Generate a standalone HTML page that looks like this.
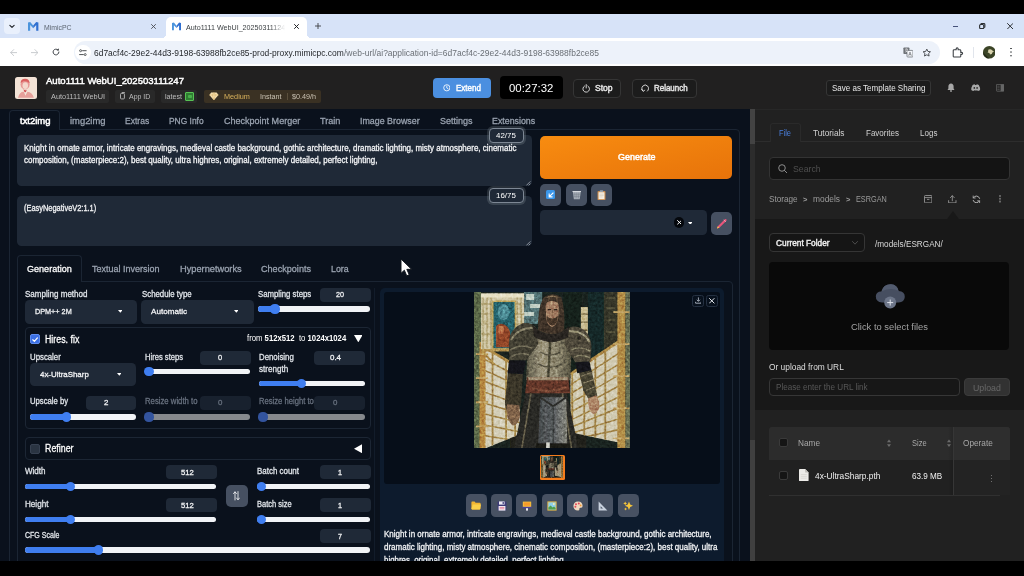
<!DOCTYPE html>
<html lang="en"><head><meta charset="utf-8"><title>Auto1111 WebUI</title>
<style>
*{box-sizing:border-box;margin:0;padding:0}
html,body{width:1024px;height:576px;overflow:hidden;background:#000;font-family:"Liberation Sans",sans-serif}
.a{position:absolute}
.t{position:absolute;white-space:nowrap;transform-origin:0 50%;display:block}
#stage{position:absolute;left:0;top:0;width:1024px;height:576px;overflow:hidden;background:#000}
/* chrome */
#tabstrip{left:0;top:14px;width:1024px;height:24px;background:#d7e3f8}
#toolbar{left:0;top:38px;width:1024px;height:28px;background:#fff}
#acttab{left:166px;top:17px;width:141px;height:21px;background:#fff;border-radius:5px 5px 0 0}
#urlpill{left:74px;top:41px;width:866px;height:23px;background:#edf2fa;border-radius:12px}
/* app header */
#hdr{left:0;top:66px;width:1024px;height:43px;background:#212020}
.tag{background:#292929;border-radius:2px;height:12.5px;top:90px}
.hbtn{border:1px solid #353535;border-radius:4px;background:#1c1c1c}
/* main */
#main{left:0;top:109px;width:750px;height:453px;background:#0a111c}
#strip{left:749.5px;top:108.5px;width:5.5px;height:453px;background:#2c2c2c}
#right{left:755px;top:108.5px;width:269px;height:453px;background:#212121}
.inp{background:#1f2937;border-radius:4.5px}
.num{background:#1f2937;border-radius:4px;height:14px}
.num.dim{background:#18212e}
.trk{height:5.2px;border-radius:3px;background:#f1f3f6}
.trk.dim{background:#86898d}
.fill{height:5.2px;border-radius:3px;background:#3f7ef0}
.th{width:9.2px;height:9.2px;border-radius:50%;background:#3f7ef0}
.th.dim{background:#33549e}
.gbtn{background:#465061;border-radius:5px}
.box{border:1px solid #1c2634;border-radius:4px}
#stage,#texts{filter:blur(.4px)}

</style></head><body>
<div id="stage">
<!-- ===== browser chrome ===== -->
<div class="a" id="tabstrip"></div>
<div class="a" style="left:3.9px;top:18.3px;width:16.1px;height:15.8px;border-radius:4px;background:#e9f0fc"></div>
<svg class="a" style="left:9px;top:23.8px" width="6" height="5.2" viewBox="0 0 7 6"><path d="M1 1.5 L3.5 4 L6 1.5" fill="none" stroke="#1f2328" stroke-width="1.3" stroke-linecap="round" stroke-linejoin="round"/></svg>
<svg class="a" style="left:28.3px;top:22.3px" width="10.4" height="8.8" viewBox="0 0 104 88"><path d="M0 6 L22 0 L52 36 L52 62 L22 30 L22 88 L0 88Z" fill="#4b94dc"/><path d="M104 6 L82 0 L52 36 L52 62 L82 30 L82 88 L104 88Z" fill="#2f6fd0"/></svg>
<svg class="a" style="left:150.8px;top:23.8px" width="5" height="5" viewBox="0 0 5 5"><path d="M.5 .5L4.5 4.5M4.5 .5L.5 4.5" stroke="#474b50" stroke-width=".9" stroke-linecap="round"/></svg>
<div class="a" id="acttab"></div>
<div class="a" style="left:162px;top:34px;width:4.4px;height:4px;background:radial-gradient(circle at 0 0,#d7e3f8 4px,#fff 4.3px)"></div>
<div class="a" style="left:307px;top:34px;width:4.4px;height:4px;background:radial-gradient(circle at 100% 0,#d7e3f8 4px,#fff 4.3px)"></div>
<svg class="a" style="left:172.2px;top:22.3px" width="9" height="8.8" viewBox="0 0 104 88"><path d="M0 6 L22 0 L52 36 L52 62 L22 30 L22 88 L0 88Z" fill="#4b94dc"/><path d="M104 6 L82 0 L52 36 L52 62 L82 30 L82 88 L104 88Z" fill="#2f6fd0"/></svg>
<svg class="a" style="left:293.8px;top:23.8px" width="5" height="5" viewBox="0 0 5 5"><path d="M.5 .5L4.5 4.5M4.5 .5L.5 4.5" stroke="#202124" stroke-width="1" stroke-linecap="round"/></svg>
<svg class="a" style="left:314.7px;top:23.3px" width="6" height="6" viewBox="0 0 6 6"><path d="M3 .3V5.7M.3 3H5.7" stroke="#3c4043" stroke-width=".9" stroke-linecap="round"/></svg>
<!-- window controls -->
<div class="a" style="left:953px;top:25.6px;width:5.4px;height:1.1px;background:#46527a"></div>
<svg class="a" style="left:979.4px;top:22.8px" width="6.4" height="6.4" viewBox="0 0 7 7"><rect x=".7" y="1.700000" width="4.500000" height="4.500000" rx="1.100000" fill="none" stroke="#2b2f33" stroke-width="1.250000"/><path d="M2.100000 1.300000Q2.200000 .6 3 .6H5.400000Q6.400000 .6 6.400000 1.600000V4Q6.400000 4.800000 5.700000 4.900000" fill="none" stroke="#2b2f33" stroke-width="1.250000"/></svg>
<svg class="a" style="left:1007px;top:23px" width="6.4" height="6.4" viewBox="0 0 6.4 6.4"><path d="M.5 .5L5.9 5.9M5.9 .5L.5 5.9" stroke="#2b2f33" stroke-width="1" stroke-linecap="round"/></svg>
<!-- toolbar -->
<div class="a" id="toolbar"></div>
<svg class="a" style="left:9.6px;top:48.6px" width="7.6" height="7.2" viewBox="0 0 7.6 7.2"><path d="M7.3 3.6H.8M3.7 .6L.7 3.6L3.7 6.6" fill="none" stroke="#c3c6ca" stroke-width=".9" stroke-linecap="round" stroke-linejoin="round"/></svg>
<svg class="a" style="left:30.6px;top:48.6px" width="7.6" height="7.2" viewBox="0 0 7.6 7.2"><path d="M.3 3.6H6.8M3.9 .6L6.9 3.6L3.9 6.6" fill="none" stroke="#c3c6ca" stroke-width=".9" stroke-linecap="round" stroke-linejoin="round"/></svg>
<svg class="a" style="left:52.4px;top:48.2px" width="8" height="8" viewBox="0 0 8 8"><path d="M6.9 4A2.9 2.9 0 1 1 5.9 1.8" fill="none" stroke="#41454a" stroke-width="1" stroke-linecap="round"/><path d="M4.6 2.4H6.9V.2Z" fill="#41454a"/></svg>
<div class="a" id="urlpill"></div>
<div class="a" style="left:75px;top:44.6px;width:15.6px;height:15.6px;border-radius:50%;background:#fff"></div>
<svg class="a" style="left:78.6px;top:48.6px" width="8" height="7.4" viewBox="0 0 8 7.4"><circle cx="1.6" cy="1.7" r="1" fill="none" stroke="#3c4043" stroke-width=".8"/><path d="M3.6 1.7H7.2" stroke="#3c4043" stroke-width=".9" stroke-linecap="round"/><circle cx="6.2" cy="5.6" r="1" fill="none" stroke="#3c4043" stroke-width=".8"/><path d="M.6 5.6H4.3" stroke="#3c4043" stroke-width=".9" stroke-linecap="round"/></svg>
<!-- translate / star / ext / avatar / menu -->
<svg class="a" style="left:902.6px;top:47px" width="10.6" height="10.6" viewBox="0 0 10.6 10.6"><rect x=".4" y=".4" width="6" height="6.6" rx=".8" fill="#6f7378"/><rect x="4" y="3.4" width="6" height="6.6" rx=".8" fill="#f4f6fa" stroke="#6f7378" stroke-width=".8"/><path d="M2 2.2H4.8M3.4 1.4V2.2M2.2 5.2Q4.2 4.4 4.6 2.4M2.4 3.4Q3.2 4.6 4.6 5.2" stroke="#fff" stroke-width=".55" fill="none"/><path d="M5.6 8.8L7 5L8.4 8.8M6.1 7.6H7.9" stroke="#5f6368" stroke-width=".6" fill="none"/></svg>
<svg class="a" style="left:922.4px;top:47.6px" width="9.6" height="9.4" viewBox="0 0 24 24"><path d="M12 2.8l2.9 6 6.5.8-4.8 4.5 1.3 6.5L12 17.4l-5.9 3.2 1.3-6.5L2.6 9.600000000000001l6.5-.8z" fill="none" stroke="#3f4347" stroke-width="2.3" stroke-linejoin="round"/></svg>
<svg class="a" style="left:951px;top:45.4px" width="13.4" height="13.4" viewBox="0 0 24 24"><path d="M5.500000 8.500000H9.200000V7a1.800000 1.800000 0 0 1 3.600000 0V8.500000H16Q17.500000 8.500000 17.500000 10V13.200000H19a1.800000 1.800000 0 0 1 0 3.600000H17.500000V20Q17.500000 21.500000 16 21.500000H5.500000Q4 21.500000 4 20V10Q4 8.500000 5.500000 8.500000Z" fill="none" stroke="#3a3e42" stroke-width="1.900000" stroke-linejoin="miter"/></svg>
<div class="a" style="left:973px;top:46.5px;width:1px;height:11.5px;background:#e1e5ec"></div>
<svg class="a" style="left:982.6px;top:46.2px" width="12.6" height="12.6" viewBox="0 0 12.6 12.6"><circle cx="6.300000" cy="6.300000" r="6.300000" fill="#3b4427"/><path d="M0 6.300000A6.300000 6.300000 0 0 0 6.300000 12.600000Q3 9 0 6.300000Z" fill="#262c1a"/><path d="M5.200000 3.800000Q7.600000 2.600000 9.400000 4.600000L11 5.400000L9.600000 6.200000Q9.200000 8.400000 7 8.600000L6.400000 7L4.600000 6.600000Q5.600000 5.600000 5.200000 3.800000Z" fill="#d9d3ae"/></svg>
<div class="a" style="left:1010.2px;top:47.6px;width:1.7px;height:1.7px;border-radius:50%;background:#3c4043;box-shadow:0 3.6px 0 #3c4043,0 7.2px 0 #3c4043"></div>
<!-- ===== app header ===== -->
<div class="a" id="hdr"></div>
<div class="a" style="left:14.8px;top:77px;width:21.8px;height:21.8px;border-radius:2.5px;background:#f3e3d6;overflow:hidden">
<svg width="21.8" height="21.8" viewBox="0 0 22 22"><defs><filter id="bl1"><feGaussianBlur stdDeviation=".55"/></filter></defs><g filter="url(#bl1)"><ellipse cx="10.2" cy="7.6" rx="4.6" ry="5" fill="#e79a96"/><ellipse cx="10.4" cy="8.6" rx="2.8" ry="3.4" fill="#f4d9cd"/><path d="M5.6 6Q6 1.600000 10.4 1.800000Q14.600000 2 14.800000 6.400000Q12 3.600000 8.400000 4.400000Z" fill="#d9605f"/><path d="M8.400000 12.400000Q10.400000 18.500000 12 12.600000Q10.400000 14.400000 8.400000 12.400000Z" fill="#cf4f52"/><path d="M3 21Q5 14.500000 9 15L10.500000 19L12.500000 15Q17.500000 15.500000 19 21Z" fill="#e6a09a"/></g></svg></div>
<div class="a tag" style="left:46px;width:63.4px"></div>
<div class="a tag" style="left:114.6px;width:40.6px"></div>
<svg class="a" style="left:119.6px;top:92.4px" width="5.8" height="7.4" viewBox="0 0 5.8 7.4"><rect x=".5" y="1.5" width="3.9" height="5.4" rx=".8" fill="none" stroke="#b5b5b5" stroke-width=".9"/><path d="M1.7 .5H4.300000Q5.300000 .5 5.300000 1.500000V5.600000" fill="none" stroke="#b5b5b5" stroke-width=".9"/></svg>
<div class="a tag" style="left:161px;width:36px"></div>
<div class="a" style="left:185.4px;top:92.4px;width:8.6px;height:8.4px;background:#2f7d32;border:1px solid #57c254;border-radius:1px"></div>
<div class="a" style="left:188px;top:94.6px;width:3.6px;height:3.8px;background:#49b04a;border-radius:1px"></div>
<div class="a" style="left:203.8px;top:90px;width:117.4px;height:12.8px;border-radius:2px;background:#3a3123"></div>
<svg class="a" style="left:209px;top:91.8px" width="9.8" height="8.6" viewBox="0 0 9.8 8.6"><path d="M2.2 .4H7.600000L9.500000 3L4.900000 8.300000L.3 3Z" fill="#f6dfae"/><path d="M.3 3H9.500000M3.400000 3L4.900000 8.300000L6.400000 3L4.900000 .4Z" fill="none" stroke="#d7ae62" stroke-width=".5"/></svg>
<div class="a" style="left:286.8px;top:92.6px;width:1px;height:7.6px;background:#5a4f3c"></div>
<!-- Extend -->
<div class="a" style="left:433px;top:78px;width:57.6px;height:19.6px;border-radius:4px;background:#4b8fe0"></div>
<svg class="a" style="left:442.6px;top:84.2px" width="7.6" height="7.6" viewBox="0 0 7.6 7.6"><circle cx="3.8" cy="3.8" r="3.1" fill="none" stroke="#fff" stroke-width=".85"/><path d="M3.800000 2V4L5 4.700000" fill="none" stroke="#fff" stroke-width=".8" stroke-linecap="round"/></svg>
<!-- timer -->
<div class="a" style="left:500px;top:76px;width:63.4px;height:23.2px;border-radius:4px;background:#000"></div>
<!-- stop / relaunch -->
<div class="a hbtn" style="left:573px;top:78.6px;width:48.4px;height:19px"></div>
<svg class="a" style="left:582px;top:84px" width="8.4" height="8.6" viewBox="0 0 8.4 8.6"><path d="M2.500000 2A3.300000 3.300000 0 1 0 5.900000 2" fill="none" stroke="#e6e6e6" stroke-width=".9" stroke-linecap="round"/><path d="M4.200000 .6V4" stroke="#e6e6e6" stroke-width=".9" stroke-linecap="round"/></svg>
<div class="a hbtn" style="left:631.6px;top:78.6px;width:65px;height:19px"></div>
<svg class="a" style="left:641px;top:84px" width="8.4" height="8.4" viewBox="0 0 8.4 8.400000"><path d="M2 7.100000A3.400000 3.400000 0 1 1 6.400000 7.100000" fill="none" stroke="#e6e6e6" stroke-width=".9" stroke-linecap="round"/><path d="M.6 5.300000L2 7.300000L3.800000 6.200000" fill="none" stroke="#e6e6e6" stroke-width=".8" stroke-linecap="round"/></svg>
<!-- save as template -->
<div class="a hbtn" style="left:826px;top:80.4px;width:104.6px;height:16px;border-radius:3px"></div>
<svg class="a" style="left:947px;top:83.400000px" width="8" height="9.2" viewBox="0 0 8 9.200000"><path d="M4 .5Q1.400000 .8 1.400000 3.600000V5.600000L.5 7H7.500000L6.600000 5.600000V3.600000Q6.600000 .8 4 .5Z" fill="#a8a8a8"/><circle cx="4" cy="8" r=".9" fill="#a8a8a8"/></svg>
<svg class="a" style="left:971.4px;top:84.4px" width="9.4" height="7.2" viewBox="0 0 9.400000 7.200000"><path d="M1.600000 .9Q3 .2 3.700000 .3L4 .9H5.400000L5.700000 .3Q6.400000 .2 7.800000 .9Q9.300000 3.400000 9.100000 6Q8 6.900000 6.800000 7L6.300000 6.200000Q4.700000 6.600000 3.100000 6.200000L2.600000 7Q1.400000 6.900000 .3 6Q.1 3.400000 1.600000 .9Z" fill="#a8a8a8"/><ellipse cx="3.300000" cy="3.900000" rx=".8" ry=".9" fill="#212020"/><ellipse cx="6.100000" cy="3.900000" rx=".8" ry=".9" fill="#212020"/></svg>
<svg class="a" style="left:996px;top:84.2px" width="8.4" height="7.6" viewBox="0 0 8.400000 7.600000"><rect x=".4" y=".4" width="7.600000" height="6.800000" rx=".6" fill="none" stroke="#666" stroke-width=".8"/><rect x="4.600000" y=".4" width="3.400000" height="6.800000" fill="#666"/><path d="M1.400000 2.200000H3.600000M1.400000 3.800000H3.600000M1.400000 5.400000H3.600000" stroke="#666" stroke-width=".6"/></svg>
<!-- ===== main left (gradio) ===== -->
<div class="a" id="main"></div>
<div class="a" style="left:9.4px;top:129px;width:730.4px;height:440px;border:1px solid #1b2533;border-radius:0 4px 0 0"></div>
<div class="a" style="left:9.4px;top:110px;width:50.8px;height:20px;border:1px solid #1b2533;border-bottom:none;border-radius:4px 4px 0 0;background:#0a111c"></div>
<div class="a inp" style="left:17px;top:135px;width:515px;height:50.6px"></div>
<div class="a inp" style="left:17px;top:196px;width:515px;height:50px"></div>
<svg class="a" style="left:526.4px;top:181px" width="4.6" height="4.6" viewBox="0 0 4.6 4.6"><path d="M.4 4.400000L4.400000 .4M2.600000 4.400000L4.400000 2.600000" stroke="#b9c0ca" stroke-width=".7"/></svg>
<svg class="a" style="left:526.4px;top:241.4px" width="4.6" height="4.6" viewBox="0 0 4.6 4.6"><path d="M.4 4.400000L4.400000 .4M2.600000 4.400000L4.400000 2.600000" stroke="#b9c0ca" stroke-width=".7"/></svg>
<div class="a" style="left:489.4px;top:128px;width:34.6px;height:14.8px;border-radius:4px;background:#1f2937;border:1px solid #7d8794;box-shadow:0 0 0 2px rgba(192,200,210,.17)"></div>
<div class="a" style="left:489.4px;top:188px;width:34.6px;height:14.8px;border-radius:4px;background:#1f2937;border:1px solid #7d8794;box-shadow:0 0 0 2px rgba(192,200,210,.17)"></div>
<div class="a" style="left:540px;top:135.5px;width:192px;height:43px;border-radius:5px;background:linear-gradient(to bottom right,#f88c10,#e7730a)"></div>
<div class="a gbtn" style="left:540px;top:183.6px;width:21.4px;height:22.4px"></div>
<div class="a gbtn" style="left:566px;top:183.6px;width:21.4px;height:22.4px"></div>
<div class="a gbtn" style="left:591px;top:183.6px;width:21.4px;height:22.4px"></div>
<div class="a" style="left:546.3px;top:190.4px;width:9px;height:9px;border-radius:1.5px;background:#3b97ea"></div>
<svg class="a" style="left:547.8px;top:191.9px" width="6" height="6" viewBox="0 0 7.2 7.2"><path d="M6 1.200000L1.600000 5.600000M1.400000 2.400000V5.800000H4.800000" fill="none" stroke="#fff" stroke-width="1.3" stroke-linecap="square"/></svg>
<svg class="a" style="left:571.9px;top:190px" width="9.6" height="9.8" viewBox="0 0 11.4 11.6"><path d="M1 1.800000H10.400000L9.200000 11H2.200000Z" fill="#aab1bb"/><path d="M.6 1.800000H10.800000" stroke="#d5d9df" stroke-width="1.2"/><path d="M3.200000 3L3.800000 10M5.700000 3V10M8.200000 3L7.600000 10M1.800000 5H9.600000M2 7.500000H9.400000" stroke="#6c7581" stroke-width=".55"/></svg>
<svg class="a" style="left:597.3px;top:189.6px" width="9" height="10.4" viewBox="0 0 10.4 12"><rect x=".6" y="1.2" width="9.200000" height="10.400000" rx="1" fill="#c98a4b"/><rect x="1.800000" y="2.600000" width="6.800000" height="8" fill="#f7efe2"/><rect x="3.200000" y=".2" width="4" height="2.200000" rx=".6" fill="#9aa3ad"/><path d="M2.800000 4.800000H7.600000M2.800000 6.400000H7.600000M2.800000 8H6.400000" stroke="#c9c2b5" stroke-width=".6"/></svg>
<div class="a inp" style="left:540px;top:210px;width:167px;height:25px"></div>
<div class="a" style="left:673.8px;top:217.4px;width:10.6px;height:10.6px;border-radius:50%;background:#05080d"></div>
<svg class="a" style="left:676.7px;top:220.3px" width="4.8" height="4.8" viewBox="0 0 4.8 4.8"><path d="M.5 .5L4.300000 4.300000M4.300000 .5L.5 4.300000" stroke="#fff" stroke-width=".95" stroke-linecap="round"/></svg>
<svg class="a" style="left:687.6px;top:221.6px" width="4.6" height="2.8" viewBox="0 0 4.6 2.8"><path d="M0 0H4.600000L2.300000 2.800000Z" fill="#fff"/></svg>
<div class="a gbtn" style="left:711px;top:212px;width:21.4px;height:23px"></div>
<svg class="a" style="left:716px;top:217.6px" width="11.6" height="11.6" viewBox="0 0 11.6 11.6"><path d="M1 10.600000L1.800000 8.200000L8.800000 1.200000Q9.600000 .6 10.300000 1.300000Q11 2 10.400000 2.800000L3.400000 9.800000Z" fill="#e8557a"/><path d="M1 10.600000L1.800000 8.200000L3.400000 9.800000Z" fill="#f6c34a"/><path d="M7.800000 1.800000L9.800000 3.800000" stroke="#f4a8b8" stroke-width=".9"/></svg>
<svg class="a" style="left:400.2px;top:258.2px" width="12.8" height="19" viewBox="0 0 11.6 17.6"><path d="M.8 .9V14.200000L3.900000 11.300000L6.100000 16.500000L8.400000 15.500000L6.200000 10.500000H10.600000Z" fill="#fff" stroke="#10151c" stroke-width=".9" stroke-linejoin="round"/></svg>
<div class="a" style="left:17.4px;top:281px;width:715.8px;height:290px;border:1px solid #1b2533;border-radius:0 4px 0 0"></div>
<div class="a" style="left:17.4px;top:255px;width:64.6px;height:27px;border:1px solid #1b2533;border-bottom:none;border-radius:4px 4px 0 0;background:#0a111c"></div>
<div class="a" style="left:373.6px;top:288px;width:1px;height:274px;background:#121c2a"></div>
<div class="a inp" style="left:25px;top:299.5px;width:112px;height:24.30000000000001px"></div>
<svg class="a" style="left:117.7px;top:310.45px" width="4.6" height="2.8" viewBox="0 0 4.6 2.8"><path d="M0 0H4.600000L2.300000 2.800000Z" fill="#fff"/></svg>
<div class="a inp" style="left:141px;top:299.5px;width:112.80000000000001px;height:24.30000000000001px"></div>
<svg class="a" style="left:233.7px;top:310.45px" width="4.6" height="2.8" viewBox="0 0 4.6 2.8"><path d="M0 0H4.600000L2.300000 2.800000Z" fill="#fff"/></svg>
<div class="a inp" style="left:30px;top:362.5px;width:106px;height:23.5px"></div>
<svg class="a" style="left:116.5px;top:373.05px" width="4.6" height="2.8" viewBox="0 0 4.6 2.8"><path d="M0 0H4.600000L2.300000 2.800000Z" fill="#fff"/></svg>
<div class="a box" style="left:25px;top:327.4px;width:345.8px;height:102px"></div>
<div class="a box" style="left:25px;top:437px;width:345.8px;height:22.6px"></div>
<div class="a" style="left:30px;top:334.4px;width:9.8px;height:9.8px;border-radius:2px;background:#3c70e4;border:1px solid #5f8df0"></div>
<svg class="a" style="left:31.8px;top:336.6px" width="6.2" height="5.4" viewBox="0 0 6.2 5.4"><path d="M.8 2.800000L2.400000 4.400000L5.400000 .9" fill="none" stroke="#fff" stroke-width="1.2" stroke-linecap="round" stroke-linejoin="round"/></svg>
<div class="a" style="left:30px;top:443.8px;width:9.8px;height:9.8px;border-radius:2px;background:#2a3442;border:1px solid #374151"></div>
<svg class="a" style="left:353.6px;top:335px" width="8.6" height="7.4" viewBox="0 0 8.6 7.4"><path d="M0 0H8.600000L4.300000 7.400000Z" fill="#fff"/></svg>
<svg class="a" style="left:353.6px;top:443.6px" width="8.4" height="9.4" viewBox="0 0 8.4 9.4"><path d="M8.400000 0V9.400000L0 4.700000Z" fill="#fff"/></svg>
<div class="a num" style="left:319.5px;top:287.5px;width:51.0px;height:14.5px"></div>
<div class="a num" style="left:200px;top:350.5px;width:50.8px;height:14.0px"></div>
<div class="a num" style="left:314px;top:350.5px;width:51.0px;height:14.0px"></div>
<div class="a num" style="left:85.5px;top:395.5px;width:50.7px;height:14.0px"></div>
<div class="a num dim" style="left:200px;top:395.5px;width:50.8px;height:14.0px"></div>
<div class="a num dim" style="left:314px;top:395.5px;width:51.0px;height:14.0px"></div>
<div class="a num" style="left:166.2px;top:465px;width:50.8px;height:14.2px"></div>
<div class="a num" style="left:166.2px;top:498.2px;width:50.8px;height:14.3px"></div>
<div class="a num" style="left:319.5px;top:465px;width:51.0px;height:14.2px"></div>
<div class="a num" style="left:319.5px;top:498.2px;width:51.0px;height:14.3px"></div>
<div class="a num" style="left:319.5px;top:529.4px;width:51.0px;height:13.6px"></div>
<div class="a trk" style="left:258px;top:306.4px;width:111.5px"></div>
<div class="a fill" style="left:258px;top:306.4px;width:17.0px"></div>
<div class="a th" style="left:270.4px;top:304.4px"></div>
<div class="a trk" style="left:145px;top:369.2px;width:105.0px"></div>
<div class="a fill" style="left:145px;top:369.2px;width:4.0px"></div>
<div class="a th" style="left:144.4px;top:367.2px"></div>
<div class="a trk" style="left:259px;top:380.6px;width:105.5px"></div>
<div class="a fill" style="left:259px;top:380.6px;width:42.8px"></div>
<div class="a th" style="left:297.2px;top:378.6px"></div>
<div class="a trk" style="left:30px;top:414.4px;width:105.5px"></div>
<div class="a fill" style="left:30px;top:414.4px;width:36.8px"></div>
<div class="a th" style="left:62.2px;top:412.4px"></div>
<div class="a trk dim" style="left:145px;top:414.4px;width:105.0px"></div>
<div class="a th dim" style="left:144.4px;top:412.4px"></div>
<div class="a trk dim" style="left:259px;top:414.4px;width:105.5px"></div>
<div class="a th dim" style="left:258.4px;top:412.4px"></div>
<div class="a trk" style="left:25px;top:483.6px;width:191.2px"></div>
<div class="a fill" style="left:25px;top:483.6px;width:45.8px"></div>
<div class="a th" style="left:66.2px;top:481.6px"></div>
<div class="a trk" style="left:257px;top:483.6px;width:112.5px"></div>
<div class="a fill" style="left:257px;top:483.6px;width:4.2px"></div>
<div class="a th" style="left:256.6px;top:481.6px"></div>
<div class="a trk" style="left:25px;top:516.6px;width:191.2px"></div>
<div class="a fill" style="left:25px;top:516.6px;width:45.8px"></div>
<div class="a th" style="left:66.2px;top:514.6px"></div>
<div class="a trk" style="left:257px;top:516.6px;width:112.5px"></div>
<div class="a fill" style="left:257px;top:516.6px;width:4.2px"></div>
<div class="a th" style="left:256.6px;top:514.6px"></div>
<div class="a trk" style="left:25px;top:547.4px;width:344.5px"></div>
<div class="a fill" style="left:25px;top:547.4px;width:73.8px"></div>
<div class="a th" style="left:94.2px;top:545.4px"></div>
<div class="a gbtn" style="left:226.2px;top:484.5px;width:21.4px;height:22.6px"></div>
<svg class="a" style="left:233.4px;top:491px" width="7" height="9.6" viewBox="0 0 7 9.6"><path d="M2 9V1M.5 2.600000L2 .8L3.500000 2.600000M5 .6V8.600000M3.500000 7L5 8.800000L6.500000 7" fill="none" stroke="#fff" stroke-width=".8" stroke-linecap="round" stroke-linejoin="round"/></svg>
<!-- ===== gallery ===== -->
<div class="a" style="left:380px;top:288px;width:343.6px;height:290px;border-radius:5px;background:#0d1b2d"></div>
<div class="a" style="left:383.8px;top:292px;width:336.2px;height:191.8px;border-radius:3px;background:#060e19"></div>
<svg class="a" style="left:474px;top:292px" width="156.400000" height="156.400000" viewBox="0 0 156 156"><defs>
<filter id="kb" x="-5%" y="-5%" width="110%" height="110%"><feGaussianBlur stdDeviation=".6"/></filter>
<filter id="kb2" x="-5%" y="-5%" width="110%" height="110%"><feGaussianBlur stdDeviation=".5"/></filter>
<filter id="kg" x="0" y="0" width="100%" height="100%" color-interpolation-filters="sRGB"><feTurbulence type="fractalNoise" baseFrequency=".38" numOctaves="3" seed="7"/><feColorMatrix type="matrix" values="1 1 0 0 -.56 1 1 0 0 -.56 1 1 0 0 -.56 0 0 0 0 1"/></filter>
<clipPath id="kc"><rect width="156" height="156"/></clipPath>
<clipPath id="lf"><path d="M11 56L46 76V142L11 156Z"/></clipPath>
<clipPath id="rf"><path d="M144 50L96 82V140L144 150Z"/></clipPath>
<linearGradient id="sk" x1="0" y1="0" x2="1" y2="0"><stop offset="0" stop-color="#4a4e50"/><stop offset=".55" stop-color="#5e6264"/><stop offset="1" stop-color="#8c8c82"/></linearGradient>
<linearGradient id="ch" x1="0" y1="0" x2="1" y2="0"><stop offset="0" stop-color="#5e5a48"/><stop offset=".35" stop-color="#a39c84"/><stop offset=".7" stop-color="#8a846c"/><stop offset="1" stop-color="#55513f"/></linearGradient>
</defs>
<g id="kn" clip-path="url(#kc)">
<rect width="156" height="156" fill="#1a2420"/>
<g filter="url(#kb)">
<!-- back wall -->
<rect x="-2" y="-4" width="9" height="164" fill="#5f6d4c"/>
<rect x="50" y="-4" width="18" height="36" fill="#56787a"/>
<path d="M52 2H60V8H52ZM56 12H66V16H56ZM50 20H60V24H50Z" fill="#c3d0c6"/>
<rect x="88" y="-4" width="20" height="86" fill="#18241f"/>
<rect x="106.600000" y="15" width="7" height="40" fill="#cbbf94"/>
<path d="M106.600000 22H113.600000M106.600000 30H113.600000M106.600000 38H113.600000M106.600000 46H113.600000" stroke="#7a6c44" stroke-width="1.200000"/>
<rect x="114" y="-4" width="15.500000" height="90" fill="#122b2b"/>
<rect x="129.500000" y="-4" width="14" height="70" fill="#37382a"/>
<path d="M132 6H141M132 16H141M132 28H141M132 40H141" stroke="#5a553c" stroke-width="1.500000"/>
<rect x="151" y="-4" width="8" height="164" fill="#6b7154"/>
<!-- floor -->
<path d="M36 138H112V160H36Z" fill="#24221a"/>
<!-- left fence -->
<g clip-path="url(#lf)"><rect x="8" y="50" width="42" height="110" fill="#d6d1bc"/>
<path d="M18.500000 50V160M32 50V160M41 50V160" stroke="#a5884a" stroke-width="1.800000"/>
<path d="M8 66L48 86M8 77L48 95M8 88L48 104M8 99L48 113M8 110L48 122M8 121L48 131M8 132L48 140M8 143L48 149" stroke="#a5884a" stroke-width="1.500000"/></g>
<path d="M10 55L46 76" stroke="#b08e48" stroke-width="2.600000"/>
<!-- right fence -->
<g clip-path="url(#rf)"><rect x="94" y="46" width="52" height="110" fill="#d3cdb6"/>
<path d="M98 46V160M110 46V160M121 46V160M131 46V160" stroke="#a5884a" stroke-width="1.800000"/>
<path d="M146 60L94 94M146 71L94 103M146 82L94 112M146 93L94 121M146 104L94 129M146 115L94 136M146 126L94 142M146 137L94 148" stroke="#a5884a" stroke-width="1.500000"/></g>
<path d="M145 49L118 67L96 82" stroke="#b08e48" stroke-width="2.600000"/>
<!-- posts -->
<rect x="143" y="-4" width="8" height="164" fill="#b4904a"/>
<path d="M139 20H155M139 52H155M139 84H155M139 116H155M139 146H155" stroke="#c4a668" stroke-width="1.800000"/>
<rect x="5.500000" y="50" width="6" height="110" fill="#b88c42"/>
<path d="M2 62H14M2 86H14M2 110H14M2 134H14" stroke="#c4a668" stroke-width="1.800000"/>
<!-- painting frame -->
<rect x="7" y="1.500000" width="43" height="57" fill="#d3cbac"/>
<path d="M9 4V58M13 4V58M17 4V58M43 4V58M47 4V58" stroke="#a89866" stroke-width="1.100000"/>
<path d="M7 12H18M7 22H18M7 32H18M7 42H18M42 12H50M42 22H50M42 32H50M42 42H50" stroke="#a89866" stroke-width="1"/>
<rect x="7" y="1.500000" width="43" height="4" fill="#e8e2c8"/>
<rect x="18" y="8.500000" width="24" height="49" fill="#c2a860"/>
<rect x="19.500000" y="10" width="21" height="46" fill="#27666f"/>
<ellipse cx="29.500000" cy="20" rx="6" ry="8" fill="#4f8f98"/>
<path d="M22 34Q26 30 31 33Q37 36 36 46L35 55H22Z" fill="#964a2c"/>
<ellipse cx="27" cy="38" rx="3" ry="4" fill="#c07a4e"/>
<path d="M7 58H50" stroke="#b89a56" stroke-width="2.500000"/>
<path d="M7 58L20 72" stroke="#b08e48" stroke-width="2"/>
</g>
<g filter="url(#kb2)">
<!-- coat / skirt -->
<path d="M52 98L39 160H105L92 98Z" fill="#2c2a25"/>
<path d="M57 100L47 160M88 100L98 160" stroke="#6c6650" stroke-width="1.600000"/>
<path d="M66 105H92L93 151H64Z" fill="url(#sk)"/>
<path d="M66 105L79 114L92 105" fill="none" stroke="#2e2e2c" stroke-width="1.800000"/>
<path d="M79 114V151" stroke="#3c3e3e" stroke-width="1.200000"/>
<path d="M62 151H96V160H62Z" fill="#1c1b18"/>
<rect x="72" y="150" width="3.600000" height="6" fill="#d8d8d0"/>
<!-- arms -->
<path d="M34 78L31 110Q31 118 35 122L44 124L47 110L49 80Z" fill="#3c372b"/>
<path d="M35 68L33.500000 81L49.500000 82L52 68Z" fill="#13171b"/>
<path d="M33 112Q31 126 38 133Q44 134 46 124L45 113Z" fill="#86674e"/>
<path d="M104 77L109 98L115 108L123 104L117 77Z" fill="#4c4636"/>
<path d="M107 84L118 80M109 91L120 87M112 98L122 94" stroke="#8a8266" stroke-width="1.100000"/>
<path d="M100 66L103 81L117 78L114 63Z" fill="#13171b"/>
<path d="M114 106Q113 118 119 122Q126 120 125 110L122 103Z" fill="#ae8767"/>
<!-- torso -->
<path d="M54 44L52 88H96L98 44Q76 36 54 44Z" fill="url(#ch)"/>
<path d="M76 50L74 86" stroke="#4a4636" stroke-width="2.400000"/>
<path d="M66 60Q76 66 86 60M64 72Q76 78 88 72" stroke="#5c5846" stroke-width="1.300000" fill="none"/>
<!-- belt -->
<path d="M53 85H94L96 101H51Z" fill="#66382a"/>
<path d="M54 86.500000H93.500000" stroke="#a4947a" stroke-width="3"/>
<path d="M58 96Q74 102 92 95" stroke="#82503a" stroke-width="2" fill="none"/>
<!-- pauldrons -->
<path d="M35 56Q33 36 50 31Q58 30 62 36L64 52L52 68L35 68Z" fill="#454235"/>
<path d="M117 58Q118 40 104 35Q96 33 92 38L90 52L101 70L116 69Z" fill="#514c3c"/>
<path d="M37 48Q44 35 60 36" stroke="#8c866c" stroke-width="2" fill="none"/>
<path d="M115 50Q110 39 94 39" stroke="#a09a7e" stroke-width="2" fill="none"/>
<path d="M36 58Q46 51 58 56M36 65Q46 59 55 63" stroke="#77725c" stroke-width="1.400000" fill="none"/>
<path d="M116 59Q106 53 97 58M116 66Q107 61 100 65" stroke="#8c866c" stroke-width="1.400000" fill="none"/>
<circle cx="105" cy="46" r="2" fill="#2a2820"/>
<!-- collar / fur -->
<path d="M58 33Q78 50 95 34L94 45Q78 55 60 45Z" fill="#2c2822"/>
<!-- hair + head -->
<path d="M69 6Q78 -1 87 5Q91 16 90 38Q79 46 64 38Q63 18 69 6Z" fill="#42362a"/>
<path d="M71 6Q78 1 86 6Q79 4 71 6Z" fill="#8d775a"/>
<path d="M75 4L73 22M82 4L85 22" stroke="#6a5640" stroke-width="1.100000"/>
<path d="M71.500000 14Q72 9 77.500000 9Q84 9 84.500000 14L84 26Q82 34 78 35Q73 34 72 26Z" fill="#a58266"/>
<path d="M72.500000 24Q78 29 83.500000 24L83 30Q78 37 73 30Z" fill="#4a382b"/>
<path d="M73.500000 17.500000H77M79.500000 17.500000H83" stroke="#35271e" stroke-width="1.200000"/>
<path d="M78.200000 18V24" stroke="#84644c" stroke-width="1.100000"/>
</g>
<rect width="156" height="156" filter="url(#kg)" opacity=".36" style="mix-blend-mode:overlay"/>
</g></svg>
<div class="a" style="left:540px;top:455px;width:24.6px;height:24.6px;background:#f47c1c;border-radius:1.5px"></div>
<svg class="a" style="left:541.4px;top:456.4px" width="21.8" height="21.8" viewBox="0 0 156 156"><use href="#kn"/><rect width="156" height="156" fill="#000" opacity=".18"/></svg>
<div class="a" style="left:692px;top:295px;width:12px;height:11.8px;border:1px solid #243041;border-radius:2.5px;background:#08111d"></div>
<div class="a" style="left:706px;top:295px;width:12px;height:11.8px;border:1px solid #243041;border-radius:2.5px;background:#08111d"></div>
<svg class="a" style="left:694.6px;top:297.4px" width="6.8" height="7" viewBox="0 0 6.8 7"><path d="M3.400000 .4V4M1.800000 2.800000L3.400000 4.400000L5 2.800000" fill="none" stroke="#aeb6c2" stroke-width=".9"/><path d="M.6 4.800000V6.200000H6.200000V4.800000" fill="none" stroke="#aeb6c2" stroke-width=".9"/></svg>
<svg class="a" style="left:709.2px;top:298.2px" width="5.6" height="5.6" viewBox="0 0 5.6 5.6"><path d="M.5 .5L5.100000 5.100000M5.100000 .5L.5 5.100000" stroke="#e8ebf0" stroke-width="1" stroke-linecap="round"/></svg>
<div class="a" style="left:465.7px;top:493.8px;width:21.2px;height:23.4px;border-radius:4.5px;background:#475162"></div>
<div class="a" style="left:491.1px;top:493.8px;width:21.2px;height:23.4px;border-radius:4.5px;background:#475162"></div>
<div class="a" style="left:516.2px;top:493.8px;width:21.2px;height:23.4px;border-radius:4.5px;background:#475162"></div>
<div class="a" style="left:541.5px;top:493.8px;width:21.2px;height:23.4px;border-radius:4.5px;background:#475162"></div>
<div class="a" style="left:566.9px;top:493.8px;width:21.2px;height:23.4px;border-radius:4.5px;background:#475162"></div>
<div class="a" style="left:592.2px;top:493.8px;width:21.2px;height:23.4px;border-radius:4.5px;background:#475162"></div>
<div class="a" style="left:617.5px;top:493.8px;width:21.2px;height:23.4px;border-radius:4.5px;background:#475162"></div>
<svg class="a" style="left:471.3px;top:501.0px" width="10" height="9" viewBox="0 0 10 9"><path d="M.4 1.400000Q.4 .6 1.200000 .6H3.600000L4.600000 1.800000H8.800000Q9.600000 1.800000 9.600000 2.600000V7.600000Q9.600000 8.400000 8.800000 8.400000H1.200000Q.4 8.400000 .4 7.600000Z" fill="#f2b632"/><path d="M.4 8L1.800000 3.600000H10L8.800000 8.400000H1.200000Z" fill="#fbd04a"/></svg>
<svg class="a" style="left:496.7px;top:500.5px" width="10" height="10" viewBox="0 0 10 10"><rect x=".6" y=".4" width="8.800000" height="9.200000" rx=".8" fill="#3d3a78"/><rect x="2" y=".4" width="5.600000" height="3.200000" fill="#ece9f3"/><rect x="5.600000" y=".9" width="1.200000" height="2.200000" fill="#3d3a78"/><rect x="1.600000" y="5" width="6.800000" height="4.600000" fill="#f3f1f6"/><path d="M2.600000 6.400000H7.400000M2.600000 7.800000H7.400000" stroke="#e05a7a" stroke-width=".7"/></svg>
<svg class="a" style="left:521.8px;top:500.5px" width="10" height="10" viewBox="0 0 10 10"><rect x=".8" y=".6" width="8.400000" height="5.600000" fill="#f3bf3f"/><rect x="1.800000" y="1.400000" width="6.400000" height="3.400000" fill="#f59a2a"/><rect x=".4" y="5.800000" width="9.200000" height="1.400000" fill="#4b3f9a"/><rect x="4" y="7.200000" width="2" height="2.400000" fill="#efeaf5"/></svg>
<svg class="a" style="left:547.1px;top:500.5px" width="10" height="10" viewBox="0 0 10 10"><rect x=".4" y=".4" width="9.200000" height="9.200000" fill="#e3b94a"/><rect x="1.400000" y="1.400000" width="7.200000" height="7.200000" fill="#8fd0ea"/><path d="M1.400000 8.600000V6.400000L3.600000 4.400000L5.600000 6.600000L7 5.400000L8.600000 7V8.600000Z" fill="#4f9e4c"/><circle cx="6.800000" cy="3" r=".9" fill="#fff3b0"/></svg>
<svg class="a" style="left:572.5px;top:500.5px" width="10" height="10" viewBox="0 0 10 10"><path d="M5 .4Q9.600000 .6 9.600000 5Q9.600000 7 7.800000 6.800000Q6.200000 6.600000 6.400000 8Q6.600000 9.600000 5 9.600000Q.4 9.200000 .4 5Q.6 .6 5 .4Z" fill="#f0d9c0"/><circle cx="3" cy="3.200000" r="1" fill="#e24a5a"/><circle cx="5.800000" cy="2.400000" r="1" fill="#e24a5a"/><circle cx="2.400000" cy="5.800000" r="1" fill="#e24a5a"/><circle cx="7.600000" cy="4.400000" r=".9" fill="#f59a2a"/></svg>
<svg class="a" style="left:597.8px;top:500.5px" width="10" height="10" viewBox="0 0 10 10"><path d="M.6 .6L9.400000 9.400000H.6Z" fill="#c9d2de"/><path d="M2.600000 5.200000L5 7.600000H2.600000Z" fill="#475162"/></svg>
<svg class="a" style="left:623.0px;top:500.5px" width="10.2" height="10" viewBox="0 0 10.2 10"><path d="M6 .6L7.200000 3.600000L10 4.800000L7.200000 6L6 9L4.800000 6L2 4.800000L4.800000 3.600000Z" fill="#f7c63a"/><path d="M2.200000 .4L2.800000 1.800000L4.200000 2.400000L2.800000 3L2.200000 4.400000L1.600000 3L.2 2.400000L1.600000 1.800000Z" fill="#f7c63a"/><path d="M2.600000 6.400000L3.100000 7.500000L4.200000 8L3.100000 8.500000L2.600000 9.600000L2.100000 8.500000L1 8L2.100000 7.500000Z" fill="#f7c63a"/></svg>
<!-- ===== right panel ===== -->
<div class="a" id="strip"></div>
<div class="a" style="left:749.5px;top:108.5px;width:5.5px;height:35.5px;background:#434343"></div>
<div class="a" style="left:749.5px;top:440px;width:5.5px;height:121.5px;background:#404040"></div>
<div class="a" id="right"></div>
<div class="a" style="left:755px;top:108.6px;width:269px;height:1px;background:#272727"></div>
<!-- tabs -->
<div class="a" style="left:755px;top:141px;width:269px;height:1px;background:#2d2d2d"></div>
<div class="a" style="left:770px;top:123px;width:31px;height:19px;border:1px solid #2a2a2a;border-bottom:none;border-radius:3px 3px 0 0;background:#212121"></div>
<!-- search -->
<div class="a" style="left:769px;top:157px;width:240.6px;height:22.6px;border-radius:4px;background:#141414;border:1px solid #333"></div>
<svg class="a" style="left:777.6px;top:164.2px" width="9.4" height="9.4" viewBox="0 0 9.4 9.4"><circle cx="4" cy="4" r="3.300000" fill="none" stroke="#9a9a9a" stroke-width=".9"/><path d="M6.500000 6.500000L8.900000 8.900000" stroke="#9a9a9a" stroke-width=".9" stroke-linecap="round"/></svg>
<!-- breadcrumb icons -->
<svg class="a" style="left:923.8px;top:194.8px" width="8.4" height="8.4" viewBox="0 0 8.400000 8.400000"><rect x=".5" y=".5" width="7.400000" height="7.400000" rx=".8" fill="none" stroke="#9c9c9c" stroke-width=".85"/><path d="M.5 2.600000H7.900000M3 4.400000H5.400000" stroke="#9c9c9c" stroke-width=".85"/></svg>
<svg class="a" style="left:948.2px;top:194.6px" width="8.6" height="8.6" viewBox="0 0 8.600000 8.600000"><path d="M4.300000 5.800000V.8M2.400000 2.600000L4.300000 .7L6.200000 2.600000" fill="none" stroke="#9c9c9c" stroke-width=".85" stroke-linecap="round" stroke-linejoin="round"/><path d="M.6 5.600000V7.900000H8V5.600000" fill="none" stroke="#9c9c9c" stroke-width=".85" stroke-linecap="round" stroke-linejoin="round"/></svg>
<svg class="a" style="left:972px;top:194.6px" width="8.8" height="8.8" viewBox="0 0 8.800000 8.800000"><path d="M7.600000 3.400000A3.400000 3.400000 0 0 0 1.400000 2.800000M1.200000 5.400000A3.400000 3.400000 0 0 0 7.400000 6" fill="none" stroke="#b4b4b4" stroke-width=".95" stroke-linecap="round"/><path d="M1.200000 1V3H3.200000M7.600000 7.800000V5.800000H5.600000" fill="none" stroke="#b4b4b4" stroke-width=".85" stroke-linecap="round" stroke-linejoin="round"/></svg>
<div class="a" style="left:999.4px;top:195.4px;width:1.4px;height:1.4px;border-radius:50%;background:#6a6a6a;box-shadow:0 2.8px 0 #6a6a6a,0 5.600000px 0 #6a6a6a"></div>
<!-- dark upload section -->
<div class="a" style="left:755px;top:218.6px;width:269px;height:191.4px;background:#181818"></div>
<svg class="a" style="left:946.5px;top:210.6px" width="12" height="8.2" viewBox="0 0 12 8.200000"><path d="M0 8.200000L6 0L12 8.200000Z" fill="#181818"/></svg>
<div class="a" style="left:769px;top:233.4px;width:96px;height:18.8px;border-radius:4px;border:1px solid #353535;background:#151515"></div>
<svg class="a" style="left:852px;top:240.8px" width="6" height="3.8" viewBox="0 0 6 3.800000"><path d="M.5 .5L3 3.200000L5.500000 .5" fill="none" stroke="#5a5a5a" stroke-width=".8" stroke-linecap="round"/></svg>
<div class="a" style="left:769px;top:262px;width:240.4px;height:88px;border-radius:4px;background:#090909"></div>
<svg class="a" style="left:874.6px;top:282.6px" width="30.6" height="26" viewBox="0 0 30.6 26"><path d="M7 19.500000Q.6 19 .8 13Q1.400000 8.200000 6.400000 8.400000Q8.600000 1 16 1.200000Q22.400000 1.600000 23.600000 8Q30 8.600000 29.800000 14Q29.400000 19.200000 23.600000 19.500000Z" fill="#464e60"/><path d="M6.400000 8.400000Q8.600000 1 16 1.200000Q22.400000 1.600000 23.600000 8Q16 4 6.400000 8.400000Z" fill="#525b6e"/><circle cx="15.200000" cy="19.600000" r="6" fill="#6d7689"/><path d="M15.200000 16.600000V22.600000M12.200000 19.600000H18.200000" stroke="#dfe3ea" stroke-width="1"/></svg>
<div class="a" style="left:769px;top:377.6px;width:190.6px;height:18.6px;border-radius:4px;border:1px solid #363636;background:#171717"></div>
<div class="a" style="left:964px;top:377.6px;width:46px;height:18.6px;border-radius:4px;background:#323232;border:1px solid #3b3b3b"></div>
<!-- table -->
<div class="a" style="left:768.8px;top:426.8px;width:240.8px;height:33px;background:#2c2c2c;border-radius:3px 3px 0 0"></div>
<div class="a" style="left:768.8px;top:494.6px;width:231.6px;height:1px;background:#303030"></div>
<div class="a" style="left:948px;top:426.8px;width:6px;height:68px;background:linear-gradient(90deg,rgba(0,0,0,0),rgba(0,0,0,.16))"></div>
<div class="a" style="left:954px;top:426.8px;width:55.6px;height:33px;background:#2e2e2e;border-radius:0 3px 0 0"></div>
<div class="a" style="left:954px;top:459.8px;width:55.6px;height:35px;background:#232323"></div>
<div class="a" style="left:952.8px;top:426.8px;width:1.4px;height:68px;background:#363636"></div>
<div class="a" style="left:779px;top:438.4px;width:8.8px;height:8.8px;border-radius:2px;background:#151515;border:1px solid #3a3a3a"></div>
<div class="a" style="left:779px;top:471px;width:8.8px;height:8.8px;border-radius:2px;background:#151515;border:1px solid #3a3a3a"></div>
<svg class="a" style="left:887px;top:438.6px" width="4" height="8.4" viewBox="0 0 4 8.400000"><path d="M0 3.200000L2 .4L4 3.200000ZM0 5.200000L2 8L4 5.200000Z" fill="#6c6c6c"/></svg>
<svg class="a" style="left:946.8px;top:438.6px" width="4" height="8.4" viewBox="0 0 4 8.400000"><path d="M0 3.200000L2 .4L4 3.200000ZM0 5.200000L2 8L4 5.200000Z" fill="#6c6c6c"/></svg>
<svg class="a" style="left:799.4px;top:468.8px" width="9.6" height="12.2" viewBox="0 0 9.600000 12.200000"><path d="M.8 0H6.200000L9.600000 3.400000V11.400000Q9.600000 12.200000 8.800000 12.200000H.8Q0 12.200000 0 11.400000V.8Q0 0 .8 0Z" fill="#ecebe8"/><path d="M6.200000 0V3.400000H9.600000Z" fill="#bdbbb6"/><path d="M1.800000 5.600000H7.800000M1.800000 7.400000H7.800000M1.800000 9.200000H7.800000" stroke="#cfcdc8" stroke-width=".6"/></svg>
<div class="a" style="left:990.8px;top:474.6px;width:1.3px;height:1.3px;border-radius:50%;background:#8a8a8a;box-shadow:0 3px 0 #8a8a8a,0 6px 0 #8a8a8a"></div>
</div>

<div id="texts">
<span class="t" id="t0" style="left:43.5px;top:22.56px;font-size:7.6px;line-height:9.88px;color:#5b6470;font-weight:400;transform:scaleX(0.9053);">MimicPC</span>
<span class="t" id="t1" style="left:186.3px;top:22.56px;font-size:7.6px;line-height:9.88px;color:#3c4043;font-weight:400;transform:scaleX(0.9397);">Auto1111 WebUI_20250311124</span>
<span class="t" id="t2" style="left:94.2px;top:48.67px;font-size:8.2px;line-height:10.66px;color:#25282c;font-weight:400;transform:scaleX(1.0323);">6d7acf4c-29e2-44d3-9198-63988fb2ce85-prod-proxy.mimicpc.com</span>
<span class="t" id="t3" style="left:344px;top:48.67px;font-size:8.2px;line-height:10.66px;color:#6a6f75;font-weight:400;transform:scaleX(1.0365);">/web-url/ai?application-id=6d7acf4c-29e2-44d3-9198-63988fb2ce85</span>
<span class="t" id="t4" style="left:46px;top:74.76px;font-size:9.6px;line-height:12.48px;color:#fff;font-weight:400;transform:scaleX(0.9949);-webkit-text-stroke:.45px;">Auto1111 WebUI_202503111247</span>
<span class="t" id="t5" style="left:51px;top:91.75px;font-size:7px;line-height:9.1px;color:#bdbdbd;font-weight:400;transform:scaleX(1.0460);">Auto1111 WebUI</span>
<span class="t" id="t6" style="left:129.2px;top:91.75px;font-size:7px;line-height:9.1px;color:#bdbdbd;font-weight:400;transform:scaleX(0.9950);">App ID</span>
<span class="t" id="t7" style="left:165px;top:91.75px;font-size:7px;line-height:9.1px;color:#bdbdbd;font-weight:400;transform:scaleX(1.0159);">latest</span>
<span class="t" id="t8" style="left:223.5px;top:91.75px;font-size:7px;line-height:9.1px;color:#d9b25c;font-weight:400;transform:scaleX(1.0399);">Medium</span>
<span class="t" id="t9" style="left:260px;top:91.75px;font-size:7px;line-height:9.1px;color:#c9c1b2;font-weight:400;transform:scaleX(1.0230);">Instant</span>
<span class="t" id="t10" style="left:292px;top:91.75px;font-size:7px;line-height:9.1px;color:#c9c1b2;font-weight:400;transform:scaleX(1.0274);">$0.49/h</span>
<span class="t" id="t11" style="left:456px;top:82.54px;font-size:8.4px;line-height:10.92px;color:#fff;font-weight:400;transform:scaleX(0.9587);-webkit-text-stroke:.4px;">Extend</span>
<span class="t" id="t12" style="left:509px;top:80.59px;font-size:11.4px;line-height:14.82px;color:#fff;font-weight:400;transform:scaleX(1.0013);">00:27:32</span>
<span class="t" id="t13" style="left:595px;top:82.74px;font-size:8.4px;line-height:10.92px;color:#e8e8e8;font-weight:400;transform:scaleX(1.0212);-webkit-text-stroke:.4px;">Stop</span>
<span class="t" id="t14" style="left:654px;top:82.74px;font-size:8.4px;line-height:10.92px;color:#e8e8e8;font-weight:400;transform:scaleX(0.9494);-webkit-text-stroke:.4px;">Relaunch</span>
<span class="t" id="t15" style="left:831.5px;top:82.68px;font-size:8.8px;line-height:11.44px;color:#e8e8e8;font-weight:400;transform:scaleX(0.9119);">Save as Template Sharing</span>
<span class="t" id="t16" style="left:19.5px;top:114.69px;font-size:9.4px;line-height:12.22px;color:#fff;font-weight:400;transform:scaleX(1.0093);-webkit-text-stroke:.5px;">txt2img</span>
<span class="t" id="t17" style="left:69.5px;top:115.62px;font-size:9.2px;line-height:11.96px;color:#9aa3b0;font-weight:400;transform:scaleX(1.0225);-webkit-text-stroke:.28px;">img2img</span>
<span class="t" id="t18" style="left:125px;top:115.62px;font-size:9.2px;line-height:11.96px;color:#9aa3b0;font-weight:400;transform:scaleX(0.9291);-webkit-text-stroke:.28px;">Extras</span>
<span class="t" id="t19" style="left:169.2px;top:115.62px;font-size:9.2px;line-height:11.96px;color:#9aa3b0;font-weight:400;transform:scaleX(0.9154);-webkit-text-stroke:.28px;">PNG Info</span>
<span class="t" id="t20" style="left:223.8px;top:115.62px;font-size:9.2px;line-height:11.96px;color:#9aa3b0;font-weight:400;transform:scaleX(0.9816);-webkit-text-stroke:.28px;">Checkpoint Merger</span>
<span class="t" id="t21" style="left:320px;top:115.62px;font-size:9.2px;line-height:11.96px;color:#9aa3b0;font-weight:400;transform:scaleX(0.9906);-webkit-text-stroke:.28px;">Train</span>
<span class="t" id="t22" style="left:360.2px;top:115.62px;font-size:9.2px;line-height:11.96px;color:#9aa3b0;font-weight:400;transform:scaleX(0.9645);-webkit-text-stroke:.28px;">Image Browser</span>
<span class="t" id="t23" style="left:440px;top:115.62px;font-size:9.2px;line-height:11.96px;color:#9aa3b0;font-weight:400;transform:scaleX(0.9818);-webkit-text-stroke:.28px;">Settings</span>
<span class="t" id="t24" style="left:492.2px;top:115.62px;font-size:9.2px;line-height:11.96px;color:#9aa3b0;font-weight:400;transform:scaleX(0.9610);-webkit-text-stroke:.28px;">Extensions</span>
<span class="t" id="t25" style="left:24px;top:143.67px;font-size:8.2px;line-height:10.66px;color:#f3f4f6;font-weight:400;transform:scaleX(0.9730);-webkit-text-stroke:.28px;">Knight in ornate armor, intricate engravings, medieval castle background, gothic architecture, dramatic lighting, misty atmosphere, cinematic</span>
<span class="t" id="t26" style="left:24px;top:155.67px;font-size:8.2px;line-height:10.66px;color:#f3f4f6;font-weight:400;transform:scaleX(0.9760);-webkit-text-stroke:.28px;">composition, (masterpiece:2), best quality, ultra highres, original, extremely detailed, perfect lighting,</span>
<span class="t" id="t27" style="left:24px;top:203.57px;font-size:8.2px;line-height:10.66px;color:#f3f4f6;font-weight:400;transform:scaleX(0.9066);-webkit-text-stroke:.28px;">(EasyNegativeV2:1.1)</span>
<span class="t" id="t28" style="left:496.4px;top:130.66px;font-size:7.6px;line-height:9.88px;color:#fff;font-weight:400;transform:scaleX(1.0412);">42/75</span>
<span class="t" id="t29" style="left:496.4px;top:190.66px;font-size:7.6px;line-height:9.88px;color:#fff;font-weight:400;transform:scaleX(1.0412);">16/75</span>
<span class="t" id="t30" style="left:618px;top:151.16px;font-size:9.6px;line-height:12.48px;color:#fff;font-weight:400;transform:scaleX(0.9346);-webkit-text-stroke:.5px;">Generate</span>
<span class="t" id="t31" style="left:27px;top:263.62px;font-size:9.2px;line-height:11.96px;color:#fff;font-weight:400;transform:scaleX(0.9853);-webkit-text-stroke:.28px;">Generation</span>
<span class="t" id="t32" style="left:92px;top:263.62px;font-size:9.2px;line-height:11.96px;color:#9aa3b0;font-weight:400;transform:scaleX(0.9789);-webkit-text-stroke:.28px;">Textual Inversion</span>
<span class="t" id="t33" style="left:179.5px;top:263.62px;font-size:9.2px;line-height:11.96px;color:#9aa3b0;font-weight:400;transform:scaleX(1.0068);-webkit-text-stroke:.28px;">Hypernetworks</span>
<span class="t" id="t34" style="left:261.2px;top:263.62px;font-size:9.2px;line-height:11.96px;color:#9aa3b0;font-weight:400;transform:scaleX(0.9889);-webkit-text-stroke:.28px;">Checkpoints</span>
<span class="t" id="t35" style="left:331.2px;top:263.62px;font-size:9.2px;line-height:11.96px;color:#9aa3b0;font-weight:400;transform:scaleX(0.9570);-webkit-text-stroke:.28px;">Lora</span>
<span class="t" id="t36" style="left:25px;top:288.54px;font-size:8.4px;line-height:10.92px;color:#e1e5ea;font-weight:400;transform:scaleX(0.9588);-webkit-text-stroke:.28px;">Sampling method</span>
<span class="t" id="t37" style="left:34.5px;top:306.60px;font-size:8px;line-height:10.4px;color:#f3f4f6;font-weight:400;transform:scaleX(0.9069);-webkit-text-stroke:.28px;">DPM++ 2M</span>
<span class="t" id="t38" style="left:141.5px;top:288.54px;font-size:8.4px;line-height:10.92px;color:#e1e5ea;font-weight:400;transform:scaleX(0.9361);-webkit-text-stroke:.28px;">Schedule type</span>
<span class="t" id="t39" style="left:151px;top:306.60px;font-size:8px;line-height:10.4px;color:#f3f4f6;font-weight:400;transform:scaleX(1.0119);-webkit-text-stroke:.28px;">Automatic</span>
<span class="t" id="t40" style="left:258px;top:288.54px;font-size:8.4px;line-height:10.92px;color:#e1e5ea;font-weight:400;transform:scaleX(0.9290);-webkit-text-stroke:.28px;">Sampling steps</span>
<span class="t" id="t41" style="left:336px;top:289.60px;font-size:8px;line-height:10.4px;color:#f3f4f6;font-weight:400;transform:scaleX(0.8982);-webkit-text-stroke:.28px;">20</span>
<span class="t" id="t42" style="left:44.5px;top:332.50px;font-size:10px;line-height:13.0px;color:#fff;font-weight:400;transform:scaleX(0.8816);-webkit-text-stroke:.28px;">Hires. fix</span>
<span class="t" id="t43" style="left:247px;top:332.74px;font-size:8.4px;line-height:10.92px;color:#fff;font-weight:400;transform:scaleX(0.9221);">from <b>512x512</b>&nbsp; to <b>1024x1024</b></span>
<span class="t" id="t44" style="left:30px;top:351.54px;font-size:8.4px;line-height:10.92px;color:#e1e5ea;font-weight:400;transform:scaleX(0.9320);-webkit-text-stroke:.28px;">Upscaler</span>
<span class="t" id="t45" style="left:40px;top:369.60px;font-size:8px;line-height:10.4px;color:#f3f4f6;font-weight:400;transform:scaleX(0.9887);-webkit-text-stroke:.28px;">4x-UltraSharp</span>
<span class="t" id="t46" style="left:144.5px;top:351.54px;font-size:8.4px;line-height:10.92px;color:#e1e5ea;font-weight:400;transform:scaleX(0.9071);-webkit-text-stroke:.28px;">Hires steps</span>
<span class="t" id="t47" style="left:218.4px;top:352.60px;font-size:8px;line-height:10.4px;color:#f3f4f6;font-weight:400;transform:scaleX(0.9432);-webkit-text-stroke:.28px;">0</span>
<span class="t" id="t48" style="left:258.8px;top:351.54px;font-size:8.4px;line-height:10.92px;color:#e1e5ea;font-weight:400;transform:scaleX(0.9342);-webkit-text-stroke:.28px;">Denoising</span>
<span class="t" id="t49" style="left:258.8px;top:363.54px;font-size:8.4px;line-height:10.92px;color:#e1e5ea;font-weight:400;transform:scaleX(0.9648);-webkit-text-stroke:.28px;">strength</span>
<span class="t" id="t50" style="left:329.6px;top:352.60px;font-size:8px;line-height:10.4px;color:#f3f4f6;font-weight:400;transform:scaleX(0.9888);-webkit-text-stroke:.28px;">0.4</span>
<span class="t" id="t51" style="left:30px;top:395.74px;font-size:8.4px;line-height:10.92px;color:#e1e5ea;font-weight:400;transform:scaleX(0.9170);-webkit-text-stroke:.28px;">Upscale by</span>
<span class="t" id="t52" style="left:104px;top:397.60px;font-size:8px;line-height:10.4px;color:#f3f4f6;font-weight:400;transform:scaleX(0.9881);-webkit-text-stroke:.28px;">2</span>
<span class="t" id="t53" style="left:144.5px;top:395.74px;font-size:8.4px;line-height:10.92px;color:#68717f;font-weight:400;transform:scaleX(0.9243);-webkit-text-stroke:.28px;">Resize width to</span>
<span class="t" id="t54" style="left:218.4px;top:397.60px;font-size:8px;line-height:10.4px;color:#68717f;font-weight:400;transform:scaleX(0.9881);-webkit-text-stroke:.28px;">0</span>
<span class="t" id="t55" style="left:258.8px;top:395.74px;font-size:8.4px;line-height:10.92px;color:#68717f;font-weight:400;transform:scaleX(0.9124);-webkit-text-stroke:.28px;">Resize height to</span>
<span class="t" id="t56" style="left:332.8px;top:397.60px;font-size:8px;line-height:10.4px;color:#68717f;font-weight:400;transform:scaleX(0.9881);-webkit-text-stroke:.28px;">0</span>
<span class="t" id="t57" style="left:44.5px;top:441.90px;font-size:10px;line-height:13.0px;color:#fff;font-weight:400;transform:scaleX(0.8837);-webkit-text-stroke:.28px;">Refiner</span>
<span class="t" id="t58" style="left:25px;top:465.54px;font-size:8.4px;line-height:10.92px;color:#e1e5ea;font-weight:400;transform:scaleX(0.9570);-webkit-text-stroke:.28px;">Width</span>
<span class="t" id="t59" style="left:180.6px;top:467.60px;font-size:8px;line-height:10.4px;color:#f3f4f6;font-weight:400;transform:scaleX(0.9581);-webkit-text-stroke:.28px;">512</span>
<span class="t" id="t60" style="left:25px;top:498.54px;font-size:8.4px;line-height:10.92px;color:#e1e5ea;font-weight:400;transform:scaleX(0.9662);-webkit-text-stroke:.28px;">Height</span>
<span class="t" id="t61" style="left:180.6px;top:500.60px;font-size:8px;line-height:10.4px;color:#f3f4f6;font-weight:400;transform:scaleX(0.9581);-webkit-text-stroke:.28px;">512</span>
<span class="t" id="t62" style="left:256.8px;top:465.54px;font-size:8.4px;line-height:10.92px;color:#e1e5ea;font-weight:400;transform:scaleX(0.9495);-webkit-text-stroke:.28px;">Batch count</span>
<span class="t" id="t63" style="left:338px;top:467.60px;font-size:8px;line-height:10.4px;color:#f3f4f6;font-weight:400;transform:scaleX(0.8982);-webkit-text-stroke:.28px;">1</span>
<span class="t" id="t64" style="left:256.8px;top:498.54px;font-size:8.4px;line-height:10.92px;color:#e1e5ea;font-weight:400;transform:scaleX(0.8954);-webkit-text-stroke:.28px;">Batch size</span>
<span class="t" id="t65" style="left:338px;top:500.60px;font-size:8px;line-height:10.4px;color:#f3f4f6;font-weight:400;transform:scaleX(0.8982);-webkit-text-stroke:.28px;">1</span>
<span class="t" id="t66" style="left:25px;top:529.54px;font-size:8.4px;line-height:10.92px;color:#e1e5ea;font-weight:400;transform:scaleX(0.8397);-webkit-text-stroke:.28px;">CFG Scale</span>
<span class="t" id="t67" style="left:338px;top:531.60px;font-size:8px;line-height:10.4px;color:#f3f4f6;font-weight:400;transform:scaleX(0.8982);-webkit-text-stroke:.28px;">7</span>
<span class="t" id="t68" style="left:384.2px;top:528.61px;font-size:8.6px;line-height:11.18px;color:#f3f4f6;font-weight:400;transform:scaleX(0.9292);-webkit-text-stroke:.28px;">Knight in ornate armor, intricate engravings, medieval castle background, gothic architecture,</span>
<span class="t" id="t69" style="left:384.2px;top:541.61px;font-size:8.6px;line-height:11.18px;color:#f3f4f6;font-weight:400;transform:scaleX(0.9311);-webkit-text-stroke:.28px;">dramatic lighting, misty atmosphere, cinematic composition, (masterpiece:2), best quality, ultra</span>
<span class="t" id="t70" style="left:384.2px;top:554.61px;font-size:8.6px;line-height:11.18px;color:#f3f4f6;font-weight:400;transform:scaleX(0.9170);-webkit-text-stroke:.28px;">highres, original, extremely detailed, perfect lighting,</span>
<span class="t" id="t71" style="left:779.4px;top:127.54px;font-size:8.4px;line-height:10.92px;color:#4a7fdc;font-weight:400;transform:scaleX(0.8889);">File</span>
<span class="t" id="t72" style="left:813px;top:127.54px;font-size:8.4px;line-height:10.92px;color:#d0d0d0;font-weight:400;transform:scaleX(0.9902);">Tutorials</span>
<span class="t" id="t73" style="left:866px;top:127.54px;font-size:8.4px;line-height:10.92px;color:#d0d0d0;font-weight:400;transform:scaleX(0.9578);">Favorites</span>
<span class="t" id="t74" style="left:920px;top:127.54px;font-size:8.4px;line-height:10.92px;color:#d0d0d0;font-weight:400;transform:scaleX(0.9575);">Logs</span>
<span class="t" id="t75" style="left:793.4px;top:163.74px;font-size:8.4px;line-height:10.92px;color:#4f4f4f;font-weight:400;transform:scaleX(1.0397);">Search</span>
<span class="t" id="t76" style="left:769px;top:193.74px;font-size:8.4px;line-height:10.92px;color:#9b9b9b;font-weight:400;transform:scaleX(0.9747);">Storage</span>
<span class="t" id="t77" style="left:803px;top:194.59px;font-size:7.4px;line-height:9.62px;color:#9b9b9b;font-weight:700;transform:scaleX(1.0166);">&gt;</span>
<span class="t" id="t78" style="left:813px;top:193.74px;font-size:8.4px;line-height:10.92px;color:#9b9b9b;font-weight:400;">models</span>
<span class="t" id="t79" style="left:845.6px;top:194.59px;font-size:7.4px;line-height:9.62px;color:#9b9b9b;font-weight:700;transform:scaleX(1.0166);">&gt;</span>
<span class="t" id="t80" style="left:855.8px;top:193.74px;font-size:8.4px;line-height:10.92px;color:#9b9b9b;font-weight:400;transform:scaleX(0.8707);">ESRGAN</span>
<span class="t" id="t81" style="left:776px;top:237.81px;font-size:8.6px;line-height:11.18px;color:#f0f0f0;font-weight:400;transform:scaleX(0.9674);-webkit-text-stroke:.4px;">Current Folder</span>
<span class="t" id="t82" style="left:875px;top:238.54px;font-size:8.4px;line-height:10.92px;color:#d8d8d8;font-weight:400;transform:scaleX(0.9775);">/models/ESRGAN/</span>
<span class="t" id="t83" style="left:851px;top:321.62px;font-size:9.2px;line-height:11.96px;color:#a2a2a2;font-weight:400;transform:scaleX(1.0188);">Click to select files</span>
<span class="t" id="t84" style="left:769px;top:361.61px;font-size:8.6px;line-height:11.18px;color:#dedede;font-weight:400;transform:scaleX(0.9726);">Or upload from URL</span>
<span class="t" id="t85" style="left:776.2px;top:381.54px;font-size:8.4px;line-height:10.92px;color:#575757;font-weight:400;transform:scaleX(0.9677);">Please enter the URL link</span>
<span class="t" id="t86" style="left:973.2px;top:382.54px;font-size:8.4px;line-height:10.92px;color:#686868;font-weight:400;transform:scaleX(1.0472);">Upload</span>
<span class="t" id="t87" style="left:798.2px;top:437.54px;font-size:8.4px;line-height:10.92px;color:#a8a8a8;font-weight:400;transform:scaleX(0.9846);">Name</span>
<span class="t" id="t88" style="left:912px;top:437.54px;font-size:8.4px;line-height:10.92px;color:#a8a8a8;font-weight:400;transform:scaleX(0.8959);">Size</span>
<span class="t" id="t89" style="left:963.2px;top:437.54px;font-size:8.4px;line-height:10.92px;color:#a8a8a8;font-weight:400;transform:scaleX(0.9846);">Operate</span>
<span class="t" id="t90" style="left:815px;top:470.54px;font-size:8.4px;line-height:10.92px;color:#f0f0f0;font-weight:400;transform:scaleX(0.9963);">4x-UltraSharp.pth</span>
<span class="t" id="t91" style="left:912px;top:470.54px;font-size:8.4px;line-height:10.92px;color:#f0f0f0;font-weight:400;transform:scaleX(0.9679);">63.9 MB</span>
</div>
<div id="over">
<div class="a" style="left:270px;top:20px;width:18px;height:14px;z-index:5;background:linear-gradient(90deg,rgba(255,255,255,0),#fff 85%)"></div>
<!-- letterbox bars -->
<div class="a" style="left:0;top:0;width:1024px;height:14.1px;background:#000;z-index:10"></div>
<div class="a" style="left:0;top:561.4px;width:1024px;height:15px;background:#000;z-index:10"></div>
</div>

</body></html>
